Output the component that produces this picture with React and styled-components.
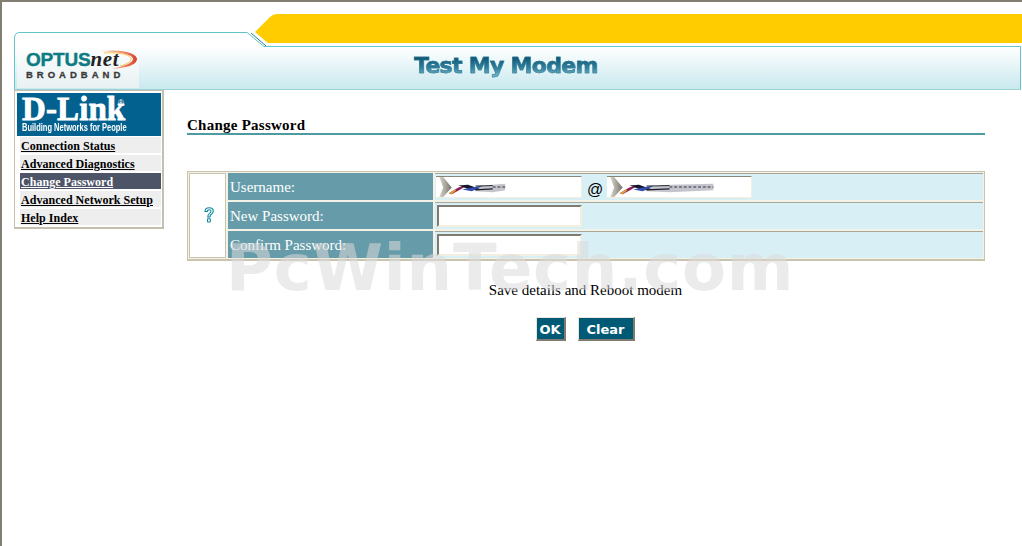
import React from "react";
import styled, { createGlobalStyle } from "styled-components";

const menuItems = [
  { label: "Connection Status" },
  { label: "Advanced Diagnostics" },
  { label: "Change Password", active: true },
  { label: "Advanced Network Setup" },
  { label: "Help Index" }
];

const App = () => (
  <Page>
    <GlobalStyle />
    <Header>
      <BannerShape viewBox="0 0 1020 76" preserveAspectRatio="none">
        <defs>
          <linearGradient id="bannerFill" x1="0" y1="0" x2="0" y2="1">
            <stop offset="0" stopColor="#ffffff" />
            <stop offset="0.25" stopColor="#ffffff" />
            <stop offset="1" stopColor="#c8e9ef" />
          </linearGradient>
        </defs>
        <path d="M253 18 L268 3 Q271 0 275 0 L1020 0 L1020 29 L266 29 Z" fill="#ffcc00" />
        <path
          d="M12.5 24 Q12.5 18.5 18 18.5 L245 18.5 L262 32.5 L1018.5 32.5 L1018.5 75.5 L12.5 75.5 Z"
          fill="url(#bannerFill)"
          stroke="#62c6c9"
        />
        <path d="M249 19 L264 32" stroke="#2f7f86" strokeWidth="1" fill="none" />
        <path d="M12.5 75.5 L1018.5 75.5" stroke="#9cd4d6" />
      </BannerShape>
      <OptusLogo>
        <Swoosh viewBox="0 0 38 20">
          <defs>
            <linearGradient id="swooshFill" x1="0" y1="0" x2="1" y2="0">
              <stop offset="0" stopColor="#f8d8c8" />
              <stop offset="0.6" stopColor="#f09070" />
              <stop offset="1" stopColor="#d8402c" />
            </linearGradient>
          </defs>
          <path
            d="M0 1 C18 -1 37 2 37 9 C37 15 26 18 12 19 C24 16 33 13 33 9 C33 4 18 2 0 1 Z"
            fill="url(#swooshFill)"
          />
          <path d="M4 3 C16 2 29 4 31 8 C32 11 28 14 20 16" stroke="#f8c850" strokeWidth="1" fill="none" />
        </Swoosh>
        <OptusWord>
          OPTUS<NetWord>net</NetWord>
        </OptusWord>
        <Broadband>BROADBAND</Broadband>
      </OptusLogo>
      <PageHeading>Test My Modem</PageHeading>
    </Header>

    <Content>
      <Sidebar>
        <DlinkLogo>
          <DlinkWord>
            D-Link<Registered>®</Registered>
          </DlinkWord>
          <DlinkTag>Building Networks for People</DlinkTag>
        </DlinkLogo>
        <Menu>
          {menuItems.map(item => (
            <MenuRow key={item.label} $active={item.active}>
              <MenuLink href="#" $active={item.active}>
                {item.label}
              </MenuLink>
            </MenuRow>
          ))}
        </Menu>
      </Sidebar>

      <Main>
        <SectionTitle>Change Password</SectionTitle>
        <FormTable>
          <tbody>
            <tr>
              <HelpCell rowSpan={3}>
                <HelpIcon viewBox="0 0 10 16">
                  <path
                    d="M1 4.5 C1 2 3 0.7 5.2 0.7 C7.5 0.7 9.3 2.2 9.3 4.3 C9.3 6 8 6.9 6.8 7.7 C6.2 8.1 6 8.7 6 10 L3.8 10 C3.8 8.2 4.2 7.2 5.4 6.4 C6.4 5.7 7 5.2 7 4.3 C7 3.3 6.2 2.8 5.2 2.8 C4.1 2.8 3.3 3.4 3.3 4.5 Z"
                    fill="#fff"
                    stroke="#0b88a0"
                    strokeWidth="1.1"
                  />
                  <rect x="3.5" y="11.8" width="2.8" height="3.2" rx="0.6" fill="#fff" stroke="#0b88a0" strokeWidth="1.1" />
                </HelpIcon>
              </HelpCell>
              <LabelCell>Username:</LabelCell>
              <ValueCell>
                <ValueRow>
                  <MaskedField $width={146}>
                    <Smear viewBox="0 0 146 22" $width={146}>
                      <MaskMarks id="smearUser" tail={69} lines={56} />
                    </Smear>
                  </MaskedField>
                  <AtSign>@</AtSign>
                  <MaskedField $width={145}>
                    <Smear viewBox="0 0 145 22" $width={145}>
                      <MaskMarks id="smearHost" tail={108} lines={62} />
                    </Smear>
                  </MaskedField>
                </ValueRow>
              </ValueCell>
            </tr>
            <tr>
              <LabelCell>New Password:</LabelCell>
              <ValueCell>
                <PasswordInput type="password" />
              </ValueCell>
            </tr>
            <tr>
              <LabelCell>Confirm Password:</LabelCell>
              <ValueCell>
                <PasswordInput type="password" />
              </ValueCell>
            </tr>
          </tbody>
        </FormTable>
        <SaveNote>Save details and Reboot modem</SaveNote>
        <Actions>
          <ActionButton $width={30}>OK</ActionButton>
          <ActionButton $width={57}>Clear</ActionButton>
        </Actions>
      </Main>
    </Content>
    <Watermark>PcWinTech.com</Watermark>
  </Page>
);

const MaskMarks = ({ id, tail, lines }) => (
  <>
    <defs>
      <filter id={id} x="-5%" y="-20%" width="110%" height="140%">
        <feGaussianBlur stdDeviation="0.5" />
      </filter>
      <linearGradient id={`${id}Edge`} x1="0" y1="0" x2="1" y2="0">
        <stop offset="0" stopColor="#d8d6cc" />
        <stop offset="1" stopColor="#77736a" />
      </linearGradient>
    </defs>
    <path d="M0 0 L4 0 L13 11 L4 21 L0 21 L4 11 Z" fill={`url(#${id}Edge)`} />
    <g filter={`url(#${id})`}>
      <path d={`M34 11 L${lines} 8 L${tail} 7 L${tail} 14 L${lines} 16 L38 15 Z`} fill="#c4c4cc" />
      <path d="M10 17 L20 11 L30 8 L22 13 L13 18 Z" fill="#8c1c58" />
      <path d="M10 17 L16 13 L18 14 L13 18 Z" fill="#e09a30" />
      <path d="M20 9 L30 8 L44 13 L34 14 Z" fill="#15152e" />
      <path d="M24 13 L40 10 L46 9 L34 15 Z" fill="#3050b0" />
      <path d={`M38 9.5 L${lines} 9`} stroke="#1c1c28" strokeWidth="1" />
      <path d={`M38 13.5 L${lines} 12.5`} stroke="#1c1c28" strokeWidth="1.2" />
      <path d={`M${lines} 10.5 L${tail} 10.5`} stroke="#62626c" strokeWidth="1.6" strokeDasharray="3 2" />
    </g>
  </>
);

const GlobalStyle = createGlobalStyle`
  html, body {
    margin: 0;
    padding: 0;
    background: #fff;
  }
  * {
    box-sizing: border-box;
  }
`;

const Page = styled.div`
  position: relative;
  width: 1022px;
  height: 546px;
  overflow: hidden;
  background: #fff;
  border-top: 2px solid #827e72;
  border-left: 2px solid #827e72;
  padding-top: 12px;
  font-family: "Liberation Serif", "Times New Roman", serif;
`;

const Header = styled.header`
  position: relative;
  display: flex;
  align-items: flex-start;
  width: 1020px;
  height: 76px;
  padding: 33px 0 0 15px;
`;

const BannerShape = styled.svg`
  position: absolute;
  top: 0;
  left: 0;
  width: 1020px;
  height: 76px;
`;

const OptusLogo = styled.div`
  position: relative;
  width: 122px;
  height: 41px;
  padding: 3px 0 0 9px;
  background: linear-gradient(#fdfefe, #e9f1f3);
`;

const OptusWord = styled.div`
  position: relative;
  font-family: "Liberation Sans", Arial, sans-serif;
  font-size: 19px;
  line-height: 19px;
  font-weight: bold;
  color: #0d7c84;
  letter-spacing: -0.2px;
  -webkit-text-stroke: 0.4px #0d7c84;
  white-space: nowrap;
`;

const NetWord = styled.span`
  font-family: "Liberation Serif", serif;
  font-style: italic;
  font-size: 21px;
  font-weight: bold;
  letter-spacing: 0.6px;
  color: #222;
  -webkit-text-stroke: 0;
`;

const Broadband = styled.div`
  font-family: "Liberation Sans", Arial, sans-serif;
  font-size: 9.5px;
  line-height: 10px;
  font-weight: bold;
  color: #3a3a3a;
  letter-spacing: 4px;
  margin-top: 1px;
  -webkit-text-stroke: 0.3px #3a3a3a;
  white-space: nowrap;
`;

const Swoosh = styled.svg`
  position: absolute;
  top: 3px;
  left: 83px;
  width: 38px;
  height: 20px;
`;

const PageHeading = styled.h1`
  position: relative;
  margin: 3px 0 0 275px;
  font-family: "DejaVu Sans", Verdana, sans-serif;
  font-size: 22px;
  line-height: 32px;
  font-weight: bold;
  letter-spacing: -0.7px;
  white-space: nowrap;
  -webkit-text-stroke: 0.5px #2a7490;
  background: linear-gradient(#0f5a78 25%, #2f7f9c 55%, #73b4c6 80%);
  -webkit-background-clip: text;
  background-clip: text;
  color: transparent;
`;

const Content = styled.div`
  display: flex;
  align-items: flex-start;
  padding-left: 12px;
`;

const Sidebar = styled.nav`
  width: 150px;
  height: 139px;
  flex: none;
  background: #fff;
  border: 1px solid #c4c0ae;
  border-right-width: 2px;
  border-bottom-width: 2px;
  padding: 2px 1px 0 2px;
`;

const DlinkLogo = styled.div`
  height: 43px;
  padding: 0 0 0 5px;
  background: #02618f;
  color: #fff;
`;

const DlinkWord = styled.div`
  position: relative;
  font-family: "Liberation Serif", serif;
  font-size: 33px;
  line-height: 33px;
  height: 28px;
  font-weight: bold;
  letter-spacing: 0.1px;
  -webkit-text-stroke: 0.8px #fff;
  white-space: nowrap;
`;

const Registered = styled.span`
  position: absolute;
  top: -7px;
  left: 96px;
  font-family: "Liberation Sans", sans-serif;
  font-size: 8px;
  font-weight: normal;
  -webkit-text-stroke: 0;
`;

const DlinkTag = styled.div`
  font-family: "Liberation Sans", Arial, sans-serif;
  font-size: 10px;
  line-height: 13px;
  font-weight: bold;
  white-space: nowrap;
  transform: scaleX(0.75);
  transform-origin: left center;
`;

const Menu = styled.div`
  display: flex;
  flex-direction: column;
  gap: 2px;
  margin: 1px 0 0 3px;
`;

const MenuRow = styled.div`
  height: 16px;
  padding-left: 1px;
  background: ${props => (props.$active ? "#4d5468" : "#eeeeee")};
`;

const MenuLink = styled.a`
  display: block;
  font-size: 12px;
  line-height: 18px;
  font-weight: bold;
  letter-spacing: 0.03px;
  white-space: nowrap;
  color: ${props => (props.$active ? "#fff" : "#000")};
`;

const Main = styled.main`
  width: 798px;
  margin-left: 23px;
  display: flex;
  flex-direction: column;
`;

const SectionTitle = styled.h2`
  margin: 25px 0 0;
  height: 20px;
  font-size: 15px;
  line-height: 21px;
  font-weight: bold;
  letter-spacing: 0.25px;
  color: #000;
  border-bottom: 2px solid #4f9aa0;
`;

const FormTable = styled.table`
  width: 798px;
  margin-top: 36px;
  table-layout: fixed;
  border-collapse: separate;
  border-spacing: 2px;
  border-bottom: 1px solid #c8c4b0;
  box-shadow: inset 0 0 0 1px #c8c4b0;
  background: #f4f2e6;
`;

const HelpCell = styled.td`
  width: 37px;
  padding: 0;
  text-align: center;
  vertical-align: middle;
  background: #fff;
  border: 1px solid #c8c4b0;
`;

const HelpIcon = styled.svg`
  display: inline-block;
  width: 10px;
  height: 16px;
  margin: 0 0 2px 2px;
  vertical-align: middle;
`;

const LabelCell = styled.td`
  width: 205px;
  height: 27px;
  padding: 1px 0 0 2px;
  font-size: 15px;
  line-height: 26px;
  color: #fff;
  background: #669ca9;
  white-space: nowrap;
`;

const ValueCell = styled.td`
  padding: 2px 0 0 2px;
  vertical-align: top;
  background: #d7eff5;
  border-top: 1px solid #a8a698;
`;

const ValueRow = styled.div`
  display: flex;
  align-items: flex-start;
  margin-left: -1px;
`;

const MaskedField = styled.div`
  width: ${props => props.$width}px;
  height: 22px;
  background: #fff;
  border-top: 1px solid #8a8678;
  border-bottom: 1px solid #f2eee0;
  border-right: 1px solid #f2eee0;
  overflow: hidden;
`;

const Smear = styled.svg`
  display: block;
  width: ${props => props.$width}px;
  height: 21px;
`;

const AtSign = styled.span`
  width: 25px;
  padding-left: 5px;
  margin-top: 4px;
  font-family: "Liberation Sans", Arial, sans-serif;
  font-size: 16px;
  line-height: 20px;
  color: #000;
`;

const PasswordInput = styled.input`
  display: block;
  width: 145px;
  height: 22px;
  padding: 0;
  background: #fff;
  border-style: solid;
  border-width: 2px;
  border-color: #7f7b70 #f2eee0 #f2eee0 #7f7b70;
  outline: none;
`;

const SaveNote = styled.p`
  margin: 20px 0 0 -1px;
  font-size: 15px;
  line-height: 18px;
  text-align: center;
  color: #000;
`;

const Actions = styled.div`
  display: flex;
  justify-content: center;
  gap: 12px;
  margin: 18px 0 0 -2px;
`;

const ActionButton = styled.button`
  width: ${props => props.$width}px;
  height: 24px;
  padding: 1px 0 0;
  font-family: "DejaVu Sans", Verdana, sans-serif;
  font-size: 13px;
  font-weight: bold;
  color: #fff;
  background: #005a75;
  border-style: solid;
  border-width: 1px 2px 2px 1px;
  border-color: #e8e6da #7f7b70 #7f7b70 #e8e6da;
`;

const Watermark = styled.div`
  position: absolute;
  top: 229px;
  left: 224px;
  font-family: "DejaVu Sans", Verdana, sans-serif;
  font-size: 64px;
  line-height: 74px;
  font-weight: bold;
  letter-spacing: 0.8px;
  white-space: nowrap;
  color: rgba(218, 218, 218, 0.54);
  pointer-events: none;
`;

export default App;
